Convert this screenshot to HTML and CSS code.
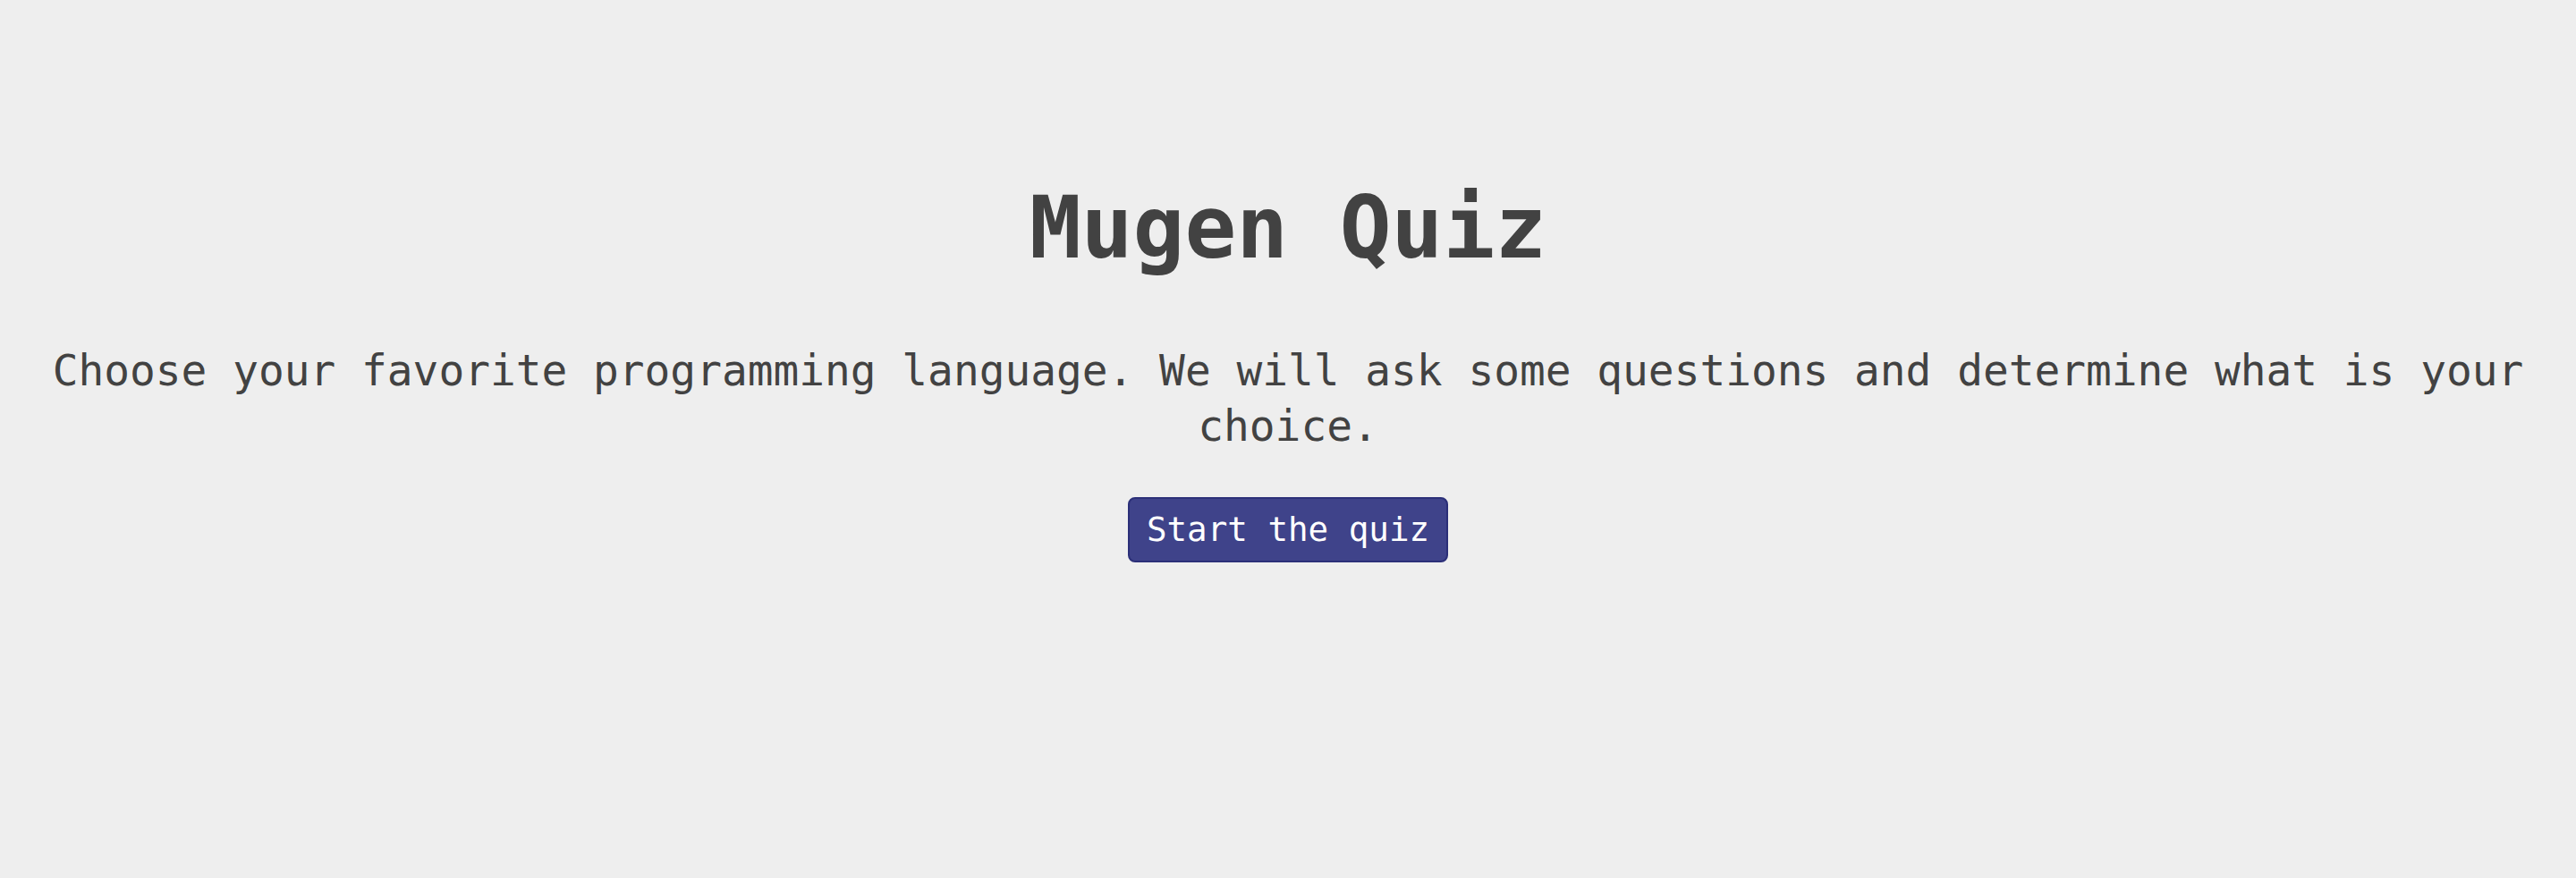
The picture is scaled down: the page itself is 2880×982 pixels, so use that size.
FILE: index.html
```html
<!DOCTYPE html>
<html lang="en">
<head>
    <meta charset="UTF-8">
    <meta name="viewport" content="width=device-width, initial-scale=1.0">
    <title>Mugen Quiz</title>
    <link rel="stylesheet" href="styles.css">
</head>
<body>
    <main class="quiz-intro">
        <h1 class="quiz-title">Mugen Quiz</h1>
        <p class="quiz-lead">Choose your favorite programming language. We will ask some questions and determine what is your choice.</p>
        <button class="start-button" type="button">Start the quiz</button>
    </main>
</body>
</html>
```

FILE: styles.css
```css
html, body {
    height: 100%;
}
body {
    font-family: 'DejaVu Sans Mono', 'Liberation Mono', monospace;
    background-color: #eeeeee;
    color: #424242;
    margin: 0;
}
.quiz-intro {
    display: flex;
    flex-direction: column;
    align-items: center;
    padding: 198px 8px 0;
    text-align: center;
}
.quiz-title {
    font-size: 96px;
    line-height: 115px;
    font-weight: bold;
    margin: 0;
}
.quiz-lead {
    font-size: 47.8px;
    line-height: 62px;
    margin: 71px 0 0;
}
.start-button {
    font-family: inherit;
    font-size: 37.5px;
    line-height: 45px;
    color: #ffffff;
    background-color: #3f438a;
    border: 2px solid #2b2f78;
    border-radius: 8px;
    padding: 12px 19px;
    margin-top: 48px;
    cursor: pointer;
}
.start-button:hover {
    background-color: #353a7e;
}
```
